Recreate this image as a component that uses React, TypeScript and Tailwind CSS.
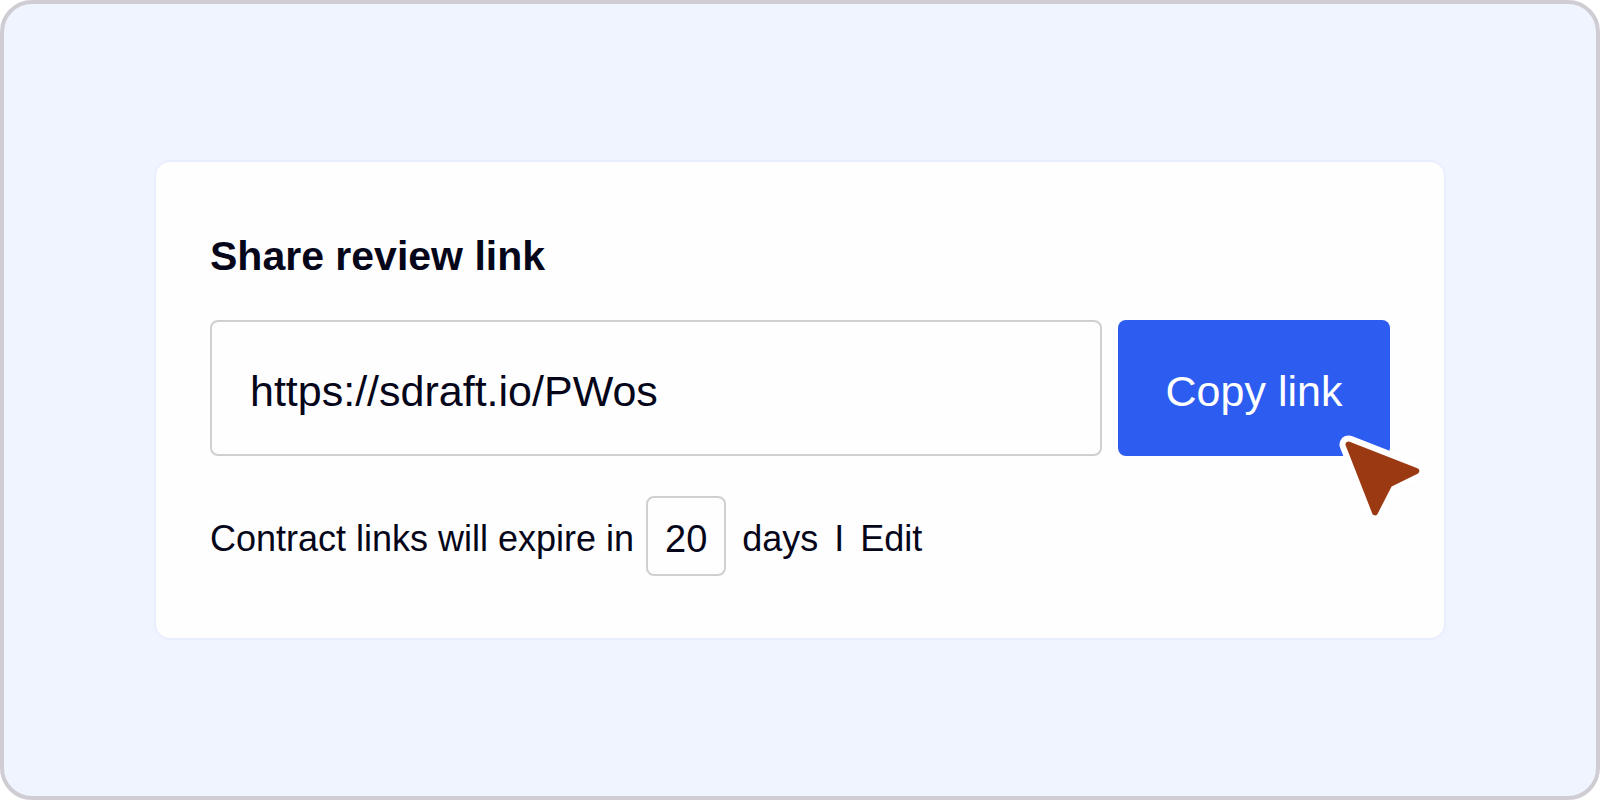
import React, { useState } from 'react';

const LINK = 'https://sdraft.io/PWos';

const CursorIcon: React.FC = () => (
  <svg
    aria-hidden="true"
    viewBox="0 0 90 90"
    strokeLinejoin="round"
    className="pointer-events-none absolute -right-[34px] -bottom-[68px] size-[90px]"
  >
    <path d="M14.5 10.5 L82.3 37 L55.3 50.3 L41 78.3 Z" fill="#fff" stroke="#fff" strokeWidth="18" />
    <path d="M14.5 10.5 L82.3 37 L55.3 50.3 L41 78.3 Z" fill="#9a3912" stroke="#9a3912" strokeWidth="6" />
  </svg>
);

export default function App() {
  const [days, setDays] = useState('20');

  const copyLink = () => {
    navigator.clipboard?.writeText(LINK);
  };

  return (
    <div className="flex min-h-screen items-center justify-center rounded-[32px] border-4 border-[#d0ccd4] bg-[#f0f4ff] px-6 font-['Liberation_Sans',Arial,sans-serif] text-[#06061a]">
      <main className="w-full max-w-[1292px] rounded-2xl border-2 border-[#e9eeff] bg-[#fefefe] px-[54px] pt-[70px] pb-[62px]">
        <h1 className="text-[41px] leading-[48px] font-bold">
          <label htmlFor="review-link">Share review link</label>
        </h1>

        {/* Link + copy */}
        <div className="mt-10 flex gap-4">
          <input
            id="review-link"
            readOnly
            value={LINK}
            className="h-[136px] min-w-0 flex-1 rounded-lg border-2 border-[#d0d0d2] bg-transparent px-[38px] pt-1.5 text-[43px] outline-none"
          />
          <div className="relative">
            <button
              type="button"
              onClick={copyLink}
              className="h-[136px] w-[272px] rounded-lg bg-[#2d5df0] pt-1.5 text-[43px] text-white"
            >
              Copy link
            </button>
            <CursorIcon />
          </div>
        </div>

        {/* Expiry */}
        <div className="mt-10 flex items-center gap-3 text-[36px] leading-[40px]">
          <label htmlFor="expiry-days" className="pt-1.5">Contract links will expire in</label>
          <div className="flex items-center gap-4">
            <input
              id="expiry-days"
              value={days}
              onChange={(e) => setDays(e.target.value)}
              className="size-20 rounded-lg border-2 border-[#d0d0d2] bg-transparent pt-1.5 text-center text-[38px] outline-none"
            />
            <span className="pt-1.5">days</span>
            <span className="pt-1.5">I</span>
            <a href="#edit" className="pt-1.5">Edit</a>
          </div>
        </div>
      </main>
    </div>
  );
}
